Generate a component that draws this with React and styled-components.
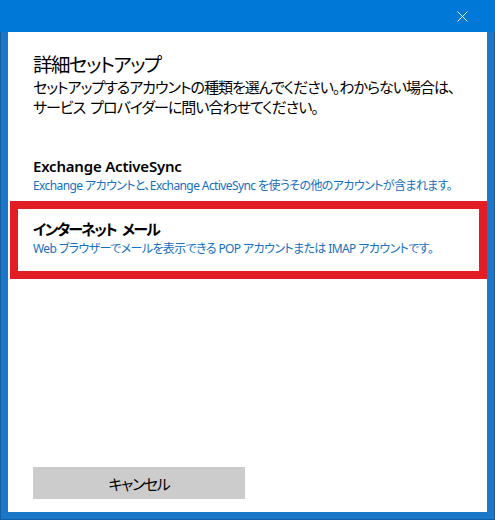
import React from "react";
import styled, { createGlobalStyle } from "styled-components";

const Global = createGlobalStyle`
  html, body { margin: 0; padding: 0; background: #ffffff; }
  body {
    font-family: "Noto Sans", "Noto Sans CJK JP", sans-serif;
    font-feature-settings: "palt";
  }
`;

const Window = styled.div`
  width: 495px;
  height: 520px;
  box-sizing: border-box;
  background: #1b77c8;
  border-left: 1px solid #145ea3;
  border-right: 1px solid #145ea3;
  border-bottom: 1px solid #145ea3;
  display: flex;
  flex-direction: column;
`;

const TitleBar = styled.div`
  height: 32px;
  flex: none;
  background: #0078d7;
  display: flex;
  justify-content: flex-end;
  align-items: stretch;
  margin: 0 -1px;
`;

const CloseButton = styled.div`
  width: 46px;
  display: flex;
  align-items: center;
  justify-content: center;
  margin-right: 10px;
`;

const Panel = styled.div`
  flex: 1;
  background: #ffffff;
  margin: 0 7px 7px;
  display: flex;
  flex-direction: column;
`;

const Header = styled.div`
  padding: 19px 25px 0;
`;

const Heading = styled.h1`
  margin: 0;
  font-size: 19.5px;
  font-weight: 400;
  line-height: 26px;
  letter-spacing: -1.5px;
  color: #000000;
  font-family: "Noto Sans CJK JP", sans-serif;
`;

const Lead = styled.p`
  margin: 0;
  font-size: 15px;
  line-height: 20px;
  letter-spacing: -1px;
  color: #000000;
  white-space: nowrap;
  font-family: "Noto Sans CJK JP", sans-serif;
`;

const Gap = styled.span`
  display: inline-block;
  width: ${(p) => p.$w || "5px"};
`;

const OptionList = styled.div`
  margin-top: 33px;
  display: flex;
  flex-direction: column;
`;

const Option = styled.div`
  padding: ${(p) => (p.$highlight ? "10px 15px 13px" : "6px 25px 6px")};
  margin: ${(p) => (p.$highlight ? "0 0 0 2px" : "0")};
  border: ${(p) => (p.$highlight ? "8px solid #e31d24" : "none")};
  display: flex;
  flex-direction: column;
`;

const OptionTitle = styled.div`
  font-size: 15px;
  font-weight: 600;
  line-height: 20px;
  letter-spacing: ${(p) => p.$spacing || "-0.2px"};
  color: #000000;
`;

const OptionDesc = styled.div`
  font-size: 12px;
  line-height: 19px;
  letter-spacing: -0.6px;
  color: #1570c0;
  white-space: nowrap;
`;

const Footer = styled.div`
  margin-top: auto;
  padding: 0 25px 13px;
`;

const Button = styled.button`
  width: 212px;
  height: 32px;
  border: none;
  background: #cccccc;
  color: #000000;
  font-size: 15px;
  letter-spacing: -1.4px;
  font-family: "Noto Sans CJK JP", sans-serif;
  font-feature-settings: "palt";
  padding: 0;
  cursor: pointer;
`;

export default function App() {
  return (
    <>
      <Global />
      <Window>
        <TitleBar>
          <CloseButton>
            <svg width="11" height="11" viewBox="0 0 11 11">
              <path d="M0.5 0.5 L10.5 10.5 M10.5 0.5 L0.5 10.5" stroke="#ffffff" strokeWidth="1" fill="none" />
            </svg>
          </CloseButton>
        </TitleBar>
        <Panel>
          <Header>
            <Heading>詳細セットアップ</Heading>
            <Lead>
              セットアップするアカウントの種類を選んでください。わからない場合は、
              <br />
              サービス<Gap />プロバイダーに問い合わせてください。
            </Lead>
          </Header>
          <OptionList>
            <Option>
              <OptionTitle>Exchange ActiveSync</OptionTitle>
              <OptionDesc>Exchange アカウントと、Exchange ActiveSync を使うその他のアカウントが含まれます。</OptionDesc>
            </Option>
            <Option $highlight>
              <OptionTitle $spacing="-1.8px">インターネット<Gap $w="6px" />メール</OptionTitle>
              <OptionDesc>Web ブラウザーでメールを表示できる POP アカウントまたは IMAP アカウントです。</OptionDesc>
            </Option>
          </OptionList>
          <Footer>
            <Button>キャンセル</Button>
          </Footer>
        </Panel>
      </Window>
    </>
  );
}
